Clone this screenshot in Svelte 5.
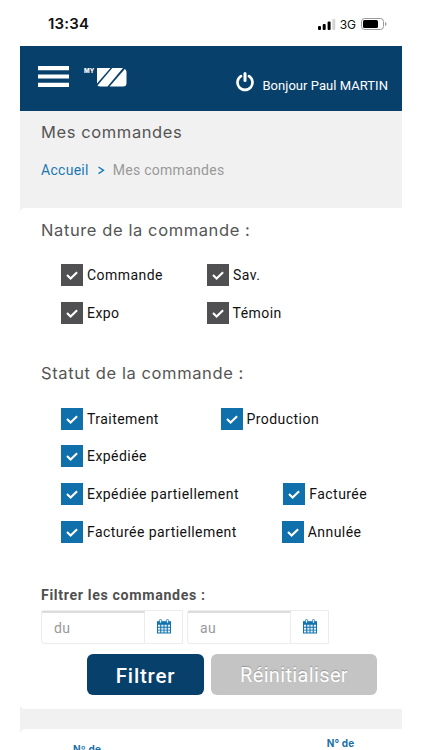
<script>
  let userName = 'Paul MARTIN';
  let dateFrom = $state('');
  let dateTo = $state('');

  // width is the room kept before the next option on the same line
  let natures = $state([
    [
      { label: 'Commande', checked: true, width: 146 },
      { label: 'Sav.', checked: true, width: 80 }
    ],
    [
      { label: 'Expo', checked: true, width: 145.5 },
      { label: 'Témoin', checked: true, width: 80 }
    ]
  ]);

  let statuts = $state([
    [
      { label: 'Traitement', checked: true, width: 159.5 },
      { label: 'Production', checked: true, width: 110 }
    ],
    [{ label: 'Expédiée', checked: true, width: 100 }],
    [
      { label: 'Expédiée partiellement', checked: true, width: 222.3 },
      { label: 'Facturée', checked: true, width: 90 }
    ],
    [
      { label: 'Facturée partiellement', checked: true, width: 220.7 },
      { label: 'Annulée', checked: true, width: 90 }
    ]
  ]);

  function resetFilters() {
    dateFrom = '';
    dateTo = '';
    for (const row of [...natures, ...statuts]) {
      for (const option of row) option.checked = true;
    }
  }
</script>

{#snippet options(rows)}
  {#each rows as row}
    <div class="option-row">
      {#each row as option}
        <label class="option" style="width: {option.width}px">
          <input type="checkbox" bind:checked={option.checked} />
          <span class="box">
            {#if option.checked}
              <svg width="22" height="22" viewBox="0 0 22 22" fill="none" stroke="#fff" stroke-width="2.1">
                <path d="M6 11l3.600 3.500 6.500-6.300" />
              </svg>
            {/if}
          </span>
          <span class="option-text">{option.label}</span>
        </label>
      {/each}
    </div>
  {/each}
{/snippet}

{#snippet calendar()}
  <svg width="14" height="15" viewBox="0 0 14 15">
    <path d="M0 2.200h14V14.500H0z" fill="#1272ae" />
    <path d="M1 5.800h2.200v2H1zM4.300 5.800h2.200v2H4.300zM7.500 5.800h2.200v2H7.500zM10.800 5.800H13v2h-2.200zM1 8.700h2.200v2H1zM4.300 8.700h2.200v2H4.300zM7.500 8.700h2.200v2H7.500zM10.800 8.700H13v2h-2.200zM1 11.600h2.200v2H1zM4.300 11.600h2.200v2H4.300zM7.500 11.600h2.200v2H7.500zM10.800 11.600H13v2h-2.200z" fill="#e3f1fa" />
    <rect x="2.400" y="0.400" width="2.200" height="3.800" rx="1.100" fill="#e3f1fa" stroke="#1272ae" stroke-width="0.800" />
    <rect x="9.400" y="0.400" width="2.200" height="3.800" rx="1.100" fill="#e3f1fa" stroke="#1272ae" stroke-width="0.800" />
  </svg>
{/snippet}

<div class="screen">
  <div class="status-bar">
    <span class="time">13:34</span>
    <div class="indicators">
      <svg width="18" height="11" viewBox="0 0 18 11">
        <rect x="0" y="7" width="3" height="4" rx="1" />
        <rect x="4.700" y="5" width="3" height="6" rx="1" />
        <rect x="9.600" y="2.500" width="3" height="8.500" rx="1" />
        <rect x="14.300" y="0" width="3" height="11" rx="1" fill="#d4d4d4" />
      </svg>
      <span class="network">3G</span>
      <svg width="26" height="12" viewBox="0 0 26 12">
        <rect x="0.500" y="0.500" width="22" height="11" rx="3" fill="none" stroke="#9a9a9a" />
        <rect x="2" y="2" width="15" height="8" rx="1.500" />
        <path d="M24 4v4q1.500-.6 1.500-2T24 4" fill="#9a9a9a" />
      </svg>
    </div>
  </div>

  <header>
    <button class="menu" aria-label="Menu">
      <svg width="31" height="21" viewBox="0 0 31 21" fill="#fff">
        <path d="M0 0h31v4.300H0zM0 8.400h31v4.200H0zM0 16.700h31V21H0z" />
      </svg>
    </button>
    <div class="logo">
      <span class="logo-my">MY</span>
      <svg width="30" height="19" viewBox="0 0 30 19" fill="#fff">
        <path d="M0 0h13.500L0 15.500zM15.300 0H26L10.500 18.500H3.500Q1.500 18.500.5 17.400zM27.800 1Q29.500 2 29.500 4v11q0 3.500-3.500 3.500H12.600z" />
      </svg>
    </div>
    <div class="user">
      <svg class="power" width="18" height="20" viewBox="0 0 18 20" fill="none" stroke="#fff">
        <path d="M5 4.100a7.500 7.500 0 1 0 8 0" stroke-width="2.700" stroke-linecap="round" />
        <path d="M9 1.500v7" stroke-width="3" stroke-linecap="round" />
      </svg>
      <span class="greeting">Bonjour {userName}</span>
    </div>
  </header>

  <section class="title-block">
    <h1>Mes commandes</h1>
    <nav>
      <a href="#accueil">Accueil</a>
      <svg width="7" height="9" viewBox="0 0 7 9" fill="none" stroke="#1a78b4" stroke-width="1.400">
        <path d="M.5 1l5 3.300-5 3.400" />
      </svg>
      <span class="current">Mes commandes</span>
    </nav>
  </section>

  <section class="card">
    <h2>Nature de la commande :</h2>
    <div class="options dark">{@render options(natures)}</div>

    <h2 class="second">Statut de la commande :</h2>
    <div class="options blue">{@render options(statuts)}</div>

    <h3>Filtrer les commandes :</h3>
    <div class="dates">
      <div class="date">
        <input type="text" placeholder="du" bind:value={dateFrom} />
        <button class="picker" aria-label="Date de début">{@render calendar()}</button>
      </div>
      <div class="date">
        <input type="text" placeholder="au" bind:value={dateTo} />
        <button class="picker" aria-label="Date de fin">{@render calendar()}</button>
      </div>
    </div>
    <div class="actions">
      <button class="submit">Filtrer</button>
      <button class="reset" onclick={resetFilters}>Réinitialiser</button>
    </div>
  </section>

  <section class="results">
    <span class="col-left">Nº de</span>
    <span class="col-right">N° de</span>
  </section>
</div>

<style>
  :global(body) {
    background: #fff;
    overflow: hidden;
  }

  * {
    box-sizing: border-box;
  }

  .screen {
    width: 382px;
    height: 750px;
    margin: 0 auto;
    overflow: hidden;
    background: #f1f1f1;
    color: #111;
    font-family: Roboto, 'Liberation Sans', sans-serif;
    display: flex;
    flex-direction: column;
  }

  button {
    border: 0;
    padding: 0;
    background: none;
    font-family: inherit;
  }

  svg {
    display: block;
    flex: none;
  }

  .status-bar {
    height: 46px;
    flex: none;
    background: #fff;
    display: flex;
    justify-content: space-between;
    padding: 14px 15px 0 28px;
    font-family: Inter, sans-serif;
  }

  .time {
    font-size: 15px;
    font-weight: 600;
    line-height: 20px;
    letter-spacing: 0.2px;
  }

  .indicators {
    display: flex;
    align-items: center;
    height: 20px;
  }

  .network {
    font-size: 12px;
    margin: 0 5px 0 4px;
  }

  header {
    height: 65px;
    flex: none;
    background: #07406b;
    display: flex;
    padding: 0 14px 0 18px;
    color: #fff;
  }

  .menu {
    height: 21px;
    margin-top: 20px;
  }

  .logo {
    display: flex;
    margin: 22px 0 0 15px;
  }

  .logo-my {
    font-family: Inter, sans-serif;
    font-size: 6px;
    font-weight: 800;
    line-height: 6px;
    width: 13px;
    letter-spacing: 0.2px;
  }

  .user {
    display: flex;
    margin-left: auto;
    padding-top: 26px;
  }

  .power {
    margin-right: 8px;
  }

  .greeting {
    font-size: 13px;
    line-height: 28px;
    letter-spacing: 0.04px;
    white-space: nowrap;
  }

  .title-block {
    height: 97px;
    flex: none;
    padding: 10px 21px 0;
  }

  h1,
  h2 {
    margin: 0;
    font-family: Inter, sans-serif;
    font-size: 16.5px;
    font-weight: 400;
    line-height: 22px;
    letter-spacing: 0.6px;
    color: #555;
    white-space: nowrap;
  }

  nav {
    display: flex;
    align-items: center;
    height: 20px;
    margin-top: 17px;
    font-size: 14px;
    letter-spacing: 0.28px;
  }

  nav a {
    color: #1a78b4;
    text-decoration: none;
  }

  nav svg {
    margin: 0 8px 0 9px;
  }

  .current {
    color: #999;
  }

  .card {
    height: 501px;
    flex: none;
    background: #fff;
    border-radius: 5px 0 0 5px;
    padding: 11px 21px 0;
  }

  .second {
    margin-top: 38.6px;
  }

  .options {
    display: flex;
    flex-direction: column;
    gap: 15.7px;
    padding: 23px 0 0 20px;
  }

  .option-row {
    display: flex;
    height: 22px;
  }

  .blue {
    padding-top: 23.4px;
  }

  .option {
    display: flex;
    flex: none;
    align-items: center;
    white-space: nowrap;
  }

  .option input {
    display: none;
  }

  .box {
    width: 22px;
    height: 22px;
    margin-right: 4px;
  }

  .dark .box {
    background: #505052;
  }

  .blue .box {
    background: #0f70ac;
  }

  .option-text {
    font-size: 14px;
    line-height: 22px;
    letter-spacing: 0.45px;
  }

  h3 {
    margin: 42px 0 0;
    font-size: 14.2px;
    font-weight: 700;
    line-height: 20px;
    letter-spacing: 0.65px;
    color: #505050;
  }

  .dates {
    display: flex;
    gap: 4px;
    margin-top: 5px;
  }

  .date {
    display: flex;
    width: 142px;
    height: 34px;
    border: 1px solid #ececec;
    border-radius: 3px 0 0 3px;
  }

  .date input {
    width: 103px;
    min-width: 0;
    border: 0;
    border-top: 2px solid #dcdcdc;
    border-right: 1px solid #ececec;
    padding: 0 0 0 12px;
    font: 14px Roboto, sans-serif;
    letter-spacing: 0.3px;
    background: none;
    outline: none;
  }

  .date input::placeholder {
    color: #999;
  }

  .picker {
    flex: 1;
    display: flex;
    align-items: center;
    justify-content: center;
  }

  .actions {
    display: flex;
    gap: 7px;
    margin: 10.5px 0 0 46px;
  }

  .actions button {
    height: 41px;
    border-radius: 6px;
    color: #fff;
    font-size: 20px;
  }

  .submit {
    width: 117px;
    padding-top: 2px;
    background: #07406b;
    font-weight: 500;
    letter-spacing: 0.8px;
  }

  .actions .submit {
    font-size: 20.5px;
  }

  .reset {
    width: 166px;
    background: #c4c4c4;
    letter-spacing: 0.35px;
    text-shadow: 0 -1px 1px #999;
  }

  .results {
    flex: none;
    display: flex;
    justify-content: space-between;
    align-items: flex-start;
    height: 60px;
    margin-top: 20px;
    padding: 7px 47.5px 0 53px;
    background: #fff;
    border-top-left-radius: 5px;
    color: #1a6fa8;
    font-family: Inter, sans-serif;
    font-size: 10px;
    font-weight: 700;
    line-height: 14px;
    letter-spacing: 0.2px;
  }

  .col-left {
    padding-top: 6px;
  }
</style>
